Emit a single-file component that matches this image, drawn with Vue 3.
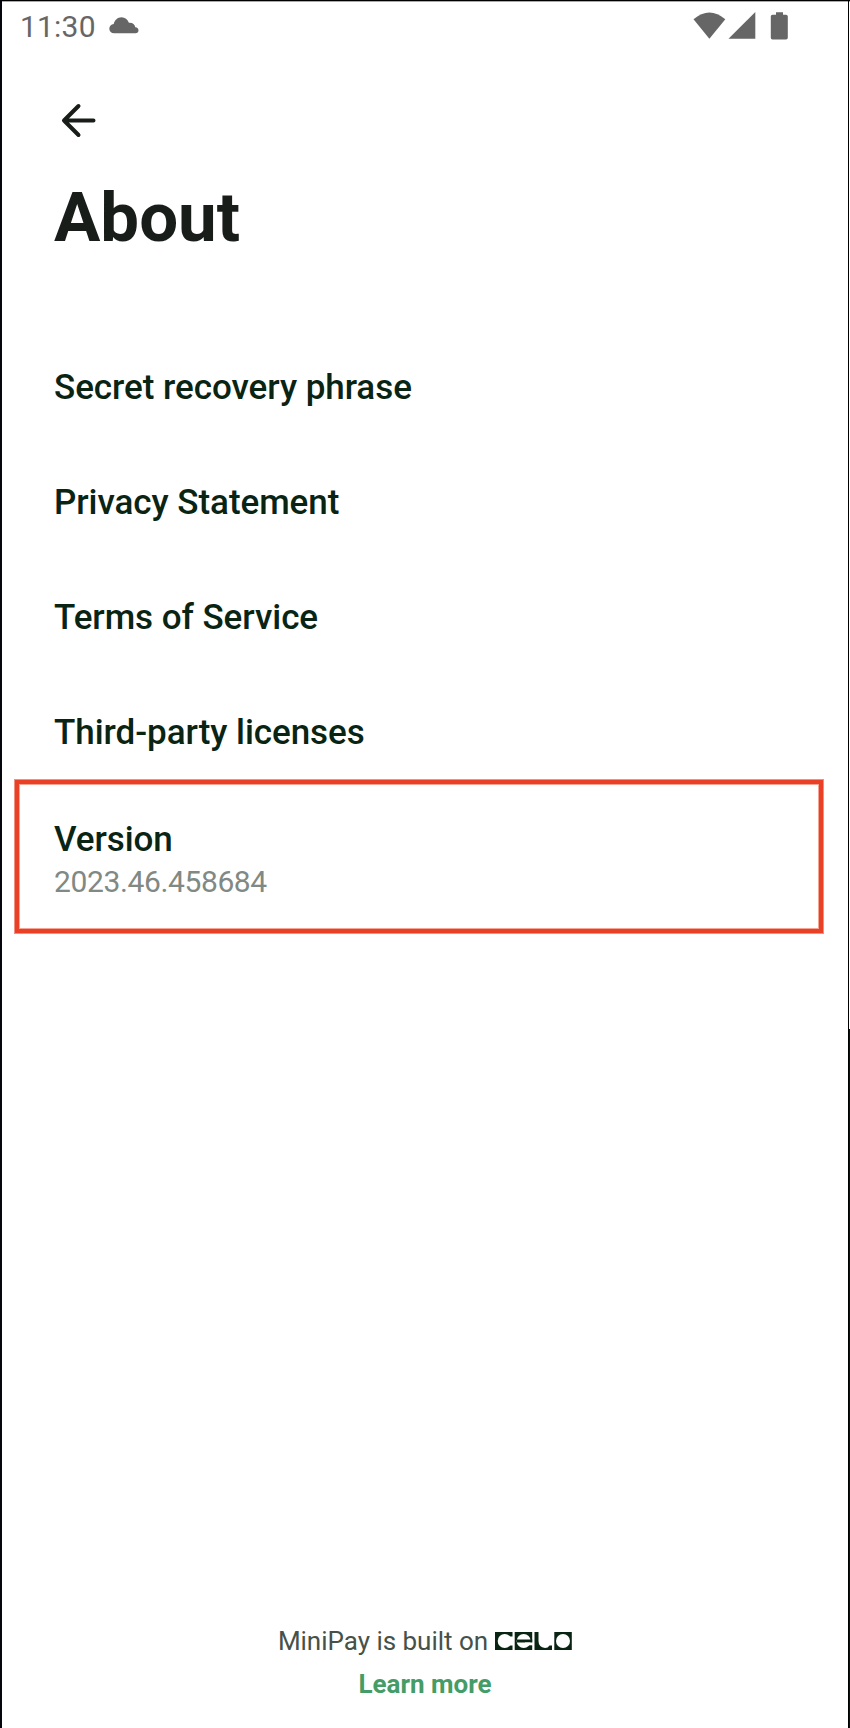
<script setup>
const links = [
  'Secret recovery phrase',
  'Privacy Statement',
  'Terms of Service',
  'Third-party licenses',
]
</script>

<template>
  <div class="screen">
    <header class="status">
      <span class="clock">11:30</span>
      <svg class="cloud" width="30" height="18" viewBox="0 0 30 18">
        <path d="M5.2 16.3C2.300 16.300 .3 14.300 .3 11.700C.3 9.200 2.200 7.300 4.700 7C5.800 3.100 8.600 .3 12.500 .3C16 .3 18.700 2.500 19.900 5.700C23.300 5.300 26 7.300 26.300 10.300C28.500 10.500 29.500 11.800 29.500 13.500C29.500 15.100 28.300 16.300 26.500 16.300Z" />
      </svg>
      <svg class="signals" width="96" height="30" viewBox="0 0 96 30">
        <path d="M.5 8.200Q16.400 -5.300 32.300 8.200L16.400 27.800Z" />
        <path d="M35.500 27.800L62.300 1V27.800Z" />
        <path d="M83 3.700V1.200H90V3.700H93Q94.800 3.700 94.800 5.500V26.800Q94.800 28.600 93 28.600H79.500Q77.800 28.600 77.800 26.800V5.500Q77.800 3.700 79.500 3.700Z" />
      </svg>
    </header>

    <main class="content">
      <button class="back" aria-label="Back">
        <svg width="36" height="36" viewBox="0 0 36 36">
          <path d="M17.500 3L3 17.500L17.500 32M3 17.500H32.500" />
        </svg>
      </button>
      <h1>About</h1>
      <nav>
        <a v-for="link in links" :key="link" class="row">{{ link }}</a>
      </nav>
      <section class="version">
        <div class="label">Version</div>
        <div class="number">2023.46.458684</div>
      </section>
    </main>

    <footer>
      <div class="built">
        <span>MiniPay is built on</span>
        <svg class="logo" width="77" height="18" viewBox="0 0 77 18">
          <path class="tile" d="M0 0H17.500V18H0ZM19.700 0H37.200V18H19.700ZM39.500 0H57V18H39.500ZM59.300 0H76.800V18H59.300Z" />
          <circle cx="9.700" cy="9" r="7" />
          <path d="M12 4.500H18V13.500H12Z" />
          <circle cx="28.700" cy="9" r="7" />
          <path class="tile" d="M22 7.500H37.200V10.500H22Z" />
          <path d="M30 10.500H38V13.300H30Z" />
          <path d="M43.500 0H58V13.500H54.500Q53 16 50 16Q43.500 15 43.500 9Z" />
          <circle cx="68" cy="9" r="7" />
        </svg>
      </div>
      <a class="learn">Learn more</a>
    </footer>
  </div>
</template>

<style>
body { margin: 0; background: #fff; }
</style>

<style scoped>
.screen {
  position: relative;
  box-sizing: border-box;
  width: 850px;
  height: 1728px;
  display: flex;
  flex-direction: column;
  border-top: 1px solid #000;
  border-left: 2px solid #05050c;
  background: #fff;
  box-shadow: inset 0 1px 0 #aaa;
  font-family: Roboto, sans-serif;
}
.screen::before {
  content: "";
  position: absolute;
  top: 0;
  right: 1px;
  width: 1px;
  height: 1727px;
  background: #000;
}
.screen::after {
  content: "";
  position: absolute;
  right: 0;
  bottom: 0;
  width: 1px;
  height: 699px;
  background: #0b0f0e;
}
.status {
  display: flex;
  align-items: flex-start;
  height: 52px;
  color: #666;
}
.status svg { fill: #666; }
.clock {
  width: 87px;
  padding: 8px 0 0 18px;
  font-size: 30px;
  line-height: 36px;
  letter-spacing: 0.2px;
}
.cloud { margin-top: 16px; margin-left: 2px; }
.signals { margin: 10px 0 0 554px; }
.content {
  flex: 1;
  display: flex;
  flex-direction: column;
}
.back {
  width: 36px;
  height: 36px;
  margin: 50px 0 0 59px;
  padding: 0;
  border: 0;
  background: none;
}
.back svg {
  display: block;
  fill: none;
  stroke: #181d1a;
  stroke-width: 4;
  stroke-linecap: round;
  stroke-linejoin: round;
}
h1 {
  margin: 39px 0 0 52px;
  font-size: 69px;
  line-height: 80px;
  font-weight: 700;
  color: #181d1a;
}
nav { margin-top: 72px; }
.row {
  display: block;
  height: 115px;
  padding-left: 52px;
  font-size: 35px;
  line-height: 115px;
  letter-spacing: -0.05px;
  font-weight: 500;
  color: #0a2414;
}
.version {
  box-sizing: border-box;
  width: 810px;
  height: 155px;
  margin: -11px 0 0 12px;
  padding: 40px 0 0 40px;
  box-shadow:
    inset 0 0 0 1px #f29080,
    inset 0 0 0 5px #ea4126,
    inset 0 0 0 6px #f5a595;
}
.label {
  font-size: 35px;
  line-height: 42px;
  letter-spacing: -0.07px;
  font-weight: 500;
  color: #0a2414;
}
.number {
  font-size: 30px;
  line-height: 42px;
  letter-spacing: -0.38px;
  color: #808984;
}
footer {
  display: flex;
  flex-direction: column;
  align-items: center;
  height: 108px;
  padding-right: 2px;
}
.built {
  display: flex;
  align-items: center;
  gap: 7px;
  height: 41px;
  margin-bottom: 2px;
  font-size: 26px;
  letter-spacing: -0.02px;
  color: #465149;
}
.logo { fill: #fff; }
.logo .tile { fill: #0a2414; }
.learn {
  font-size: 26px;
  line-height: 43px;
  font-weight: 700;
  color: #449c66;
}
</style>
